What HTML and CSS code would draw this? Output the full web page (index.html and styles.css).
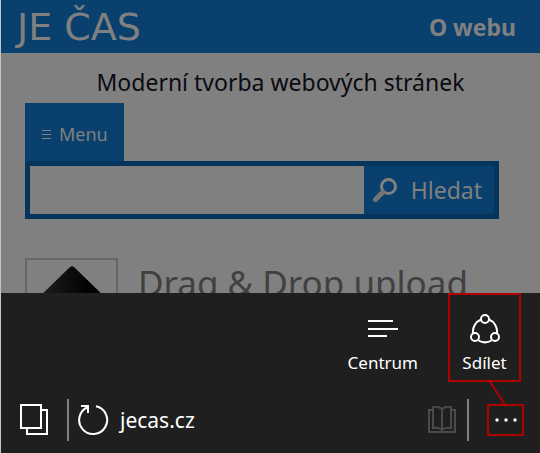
FILE: index.html
```html
<!DOCTYPE html>
<html lang="cs">
<head>
<meta charset="utf-8">
<meta name="viewport" content="width=device-width, initial-scale=1">
<title>Je čas</title>
<link rel="stylesheet" href="styles.css">
</head>
<body>
<div class="page">
  <header class="top">
    <a class="logo" href="#">JE ČAS</a>
    <a class="about" href="#">O webu</a>
  </header>
  <main class="content">
    <p class="tagline">Moderní tvorba webových stránek</p>
    <button class="menu" type="button"><svg width="9" height="9" viewBox="0 0 9 9" aria-hidden="true"><path d="M0 .5h9M0 4.5h9M0 8.5h9" stroke="currentColor"/></svg>Menu</button>
    <form class="search">
      <input type="search" aria-label="Hledaný výraz">
      <button type="submit">
        <svg width="24" height="24" viewBox="0 0 24 24" fill="none" stroke="currentColor" aria-hidden="true"><circle cx="15.5" cy="8.5" r="7" stroke-width="3"/><path d="M9.500 14.500L2.500 21.500" stroke="#747474" stroke-width="5" stroke-linecap="round"/></svg>
        Hledat
      </button>
    </form>
    <article class="post">
      <div class="thumb">
        <svg width="89" height="89" viewBox="0 0 89 89" aria-hidden="true"><defs><linearGradient id="shade"><stop offset=".2" stop-color="#191919"/><stop offset=".7" stop-color="#020202"/></linearGradient></defs><path d="M42.500 7.500q2.500-2.500 5 0L82 41q3 3.500 0 7L48 81q-3 3-6 0L8 48q-3-3.500 0-7z" fill="url(#shade)"/></svg>
      </div>
      <h2>Drag &amp; Drop upload</h2>
    </article>
  </main>
</div>
<footer class="bar">
  <div class="actions">
    <button class="action" type="button">
      <svg width="30" height="32" viewBox="0 0 30 32" stroke="currentColor" stroke-width="2" aria-hidden="true"><path d="M0 8h25M0 16h30M0 23h19"/></svg>
      Centrum
    </button>
    <button class="action marked" type="button">
      <svg width="32" height="32" viewBox="0 0 32 32" fill="none" stroke="currentColor" stroke-width="2" aria-hidden="true"><circle cx="16" cy="6" r="4"/><circle cx="6" cy="24" r="4"/><circle cx="26" cy="24" r="4"/><path d="M12 6.500A13 13 0 0 0 4 20M20 6.500A13 13 0 0 1 28 20M9.500 27.500A13 13 0 0 0 22.500 27.500"/></svg>
      Sdílet
      <svg class="link" width="22" height="25" viewBox="0 0 22 25" aria-hidden="true"><path d="M4 0L20 25" stroke="#b00000" stroke-width="2"/></svg>
    </button>
  </div>
  <nav class="address">
    <button class="tabs" type="button" aria-label="Karty"><svg width="28" height="31" viewBox="0 0 28 31" fill="none" stroke="currentColor" stroke-width="2" aria-hidden="true"><path d="M1 1h20v23H1zM21 6h6v24H7v-6"/></svg></button>
    <span class="divider"></span>
    <button class="reload" type="button" aria-label="Obnovit"><svg width="32" height="32" viewBox="0 0 32 32" fill="none" stroke="currentColor" stroke-width="2" aria-hidden="true"><path d="M19 2.300A14 14 0 1 1 11 3M4 2h7v7"/></svg></button>
    <a class="url" href="#">jecas.cz</a>
    <button class="reader" type="button" aria-label="Čtení"><svg width="28" height="28" viewBox="0 0 28 28" fill="none" stroke="currentColor" stroke-width="2" aria-hidden="true"><path d="M14 3v20M14 3Q10 0 5 1v21q6-1 9 2 3-3 9-2V1q-5-1-9 2M5 4H1v22h26V4h-4"/></svg></button>
    <span class="divider"></span>
    <button class="more" type="button" aria-label="Další"><svg width="22" height="4" viewBox="0 0 22 4" fill="currentColor" aria-hidden="true"><circle cx="2" cy="2" r="1.700"/><circle cx="11" cy="2" r="1.700"/><circle cx="20" cy="2" r="1.700"/></svg></button>
  </nav>
</footer>
</body>
</html>
```
FILE: styles.css
```css
* {
  box-sizing: border-box;
}

body {
  margin: 0;
  height: 100vh;
  display: flex;
  flex-direction: column;
  border-left: 1px solid #c4c4c4;
  background: #808080;
  font-family: "Noto Sans", "Open Sans", sans-serif;
}

button {
  margin: 0;
  padding: 0;
  border: 0;
  background: none;
  color: inherit;
  font: inherit;
}

a {
  color: inherit;
  text-decoration: none;
}

svg {
  display: block;
  flex: none;
}

.page {
  flex: 1;
  min-height: 0;
  overflow: hidden;
}

.top {
  display: flex;
  align-items: center;
  justify-content: space-between;
  height: 53px;
  padding: 0 24px 0 16px;
  background: #09406d;
  color: #808080;
}

.logo {
  font-family: "DejaVu Sans", sans-serif;
  font-size: 38px;
  line-height: 48px;
}

.about {
  font-size: 23px;
  font-weight: 700;
}

.content {
  padding: 0 24px;
}

.tagline {
  margin: 0;
  padding: 12px 0 4px 20px;
  color: #0a0a12;
  font-size: 23px;
  line-height: 34px;
  text-align: center;
}

.menu {
  display: flex;
  align-items: center;
  gap: 8px;
  height: 58px;
  padding: 4px 16px 0 17px;
  background: #09406d;
  color: #808080;
  font-size: 18px;
}

.search {
  display: flex;
  width: 474px;
  max-width: 100%;
  border: 5px solid #05345c;
}

.search input {
  flex: 1;
  min-width: 0;
  height: 48px;
  padding: 0 8px;
  border: 0;
  border-radius: 0;
  appearance: none;
  background: #808080;
  font: inherit;
}

.search button {
  display: flex;
  align-items: center;
  gap: 14px;
  padding: 0 12px 0 9px;
  background: #09406d;
  color: #808080;
  font-size: 23px;
}

.post {
  display: flex;
  gap: 20px;
  margin-top: 39px;
}

.thumb {
  flex: none;
  border: 2px solid #666;
}

.post h2 {
  margin: 0;
  color: #404040;
  font-size: 35px;
  font-weight: 400;
  line-height: 50px;
  white-space: nowrap;
}

.bar {
  background: #1f1f1f;
  color: #fff;
}

.actions {
  display: flex;
  justify-content: flex-end;
  gap: 28px;
  padding-right: 19px;
}

.action {
  position: relative;
  display: flex;
  flex-direction: column;
  align-items: center;
  gap: 6px;
  min-width: 73px;
  height: 89px;
  padding-top: 18px;
  border: 2px solid transparent;
  font-size: 17px;
  line-height: 24px;
}

.marked {
  border-color: #b00000;
}

.link {
  position: absolute;
  top: 100%;
  left: 50%;
}

.address {
  display: flex;
  align-items: center;
  height: 71px;
  padding: 4px 16px 0 19px;
}

.divider {
  width: 2px;
  height: 42px;
  background: #808080;
}

.tabs {
  margin-right: 19px;
}

.reload {
  margin: 0 11px 0 8px;
}

.url {
  flex: 1;
  font-size: 21px;
}

.reader {
  margin-right: 11px;
  color: #4a4a4a;
}

.more {
  display: flex;
  align-items: center;
  justify-content: center;
  width: 37px;
  height: 32px;
  margin-left: 18px;
  border: 2px solid #b00000;
}
```
